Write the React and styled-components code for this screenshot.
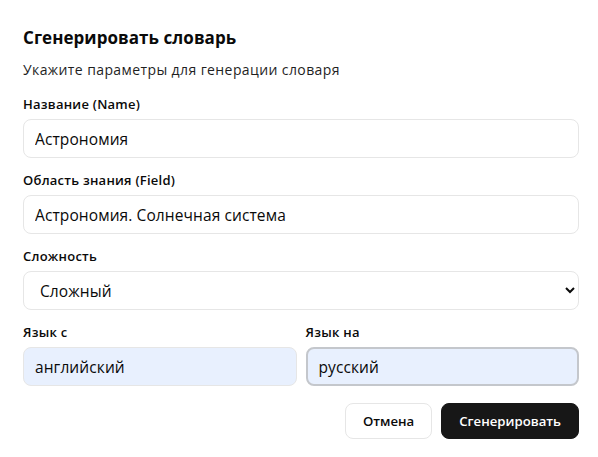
import React, { useState } from 'react';
import styled, { createGlobalStyle } from 'styled-components';

const GlobalStyle = createGlobalStyle`
  html, body {
    margin: 0;
    padding: 0;
    background: #ffffff;
  }
  body {
    font-family: "Open Sans", "Noto Sans", sans-serif;
    color: #0a0a0a;
  }
`;

function App() {
  const [name, setName] = useState('Астрономия');
  const [field, setField] = useState('Астрономия. Солнечная система');
  const [level, setLevel] = useState('hard');
  const [langFrom, setLangFrom] = useState('английский');
  const [langTo, setLangTo] = useState('русский');

  const handleSubmit = (event) => {
    event.preventDefault();
  };

  return (
    <Dialog>
      <GlobalStyle />
      <Title>Сгенерировать словарь</Title>
      <Subtitle>Укажите параметры для генерации словаря</Subtitle>
      <Form onSubmit={handleSubmit}>
        <Field>
          <Label>Название (Name)</Label>
          <Input value={name} onChange={e => setName(e.target.value)} />
        </Field>
        <Field>
          <Label>Область знания (Field)</Label>
          <Input value={field} onChange={e => setField(e.target.value)} />
        </Field>
        <Field>
          <Label>Сложность</Label>
          <Select value={level} onChange={e => setLevel(e.target.value)}>
            <option value="easy">Простой</option>
            <option value="medium">Средний</option>
            <option value="hard">Сложный</option>
          </Select>
        </Field>
        <Pair>
          <Field>
            <Label>Язык с</Label>
            <Input $filled value={langFrom} onChange={e => setLangFrom(e.target.value)} />
          </Field>
          <Field>
            <Label>Язык на</Label>
            <Input $filled $focused value={langTo} onChange={e => setLangTo(e.target.value)} />
          </Field>
        </Pair>
        <Actions>
          <Button type="button">Отмена</Button>
          <Button $primary type="submit">Сгенерировать</Button>
        </Actions>
      </Form>
    </Dialog>
  );
}

const Dialog = styled.div`
  box-sizing: border-box;
  width: 598px;
  height: 457px;
  padding: 26px 19px 0 23px;
  background: #ffffff;
  border-radius: 10px;
`;

const Title = styled.h2`
  margin: 0;
  font-size: 17px;
  font-weight: 700;
  line-height: 24px;
  letter-spacing: 0.05px;
`;

const Subtitle = styled.p`
  margin: 10px 0 0;
  font-size: 14px;
  line-height: 20px;
  letter-spacing: 0.4px;
  color: #1f1f1f;
`;

const Form = styled.form`
  display: flex;
  flex-direction: column;
  gap: 13px;
  margin-top: 15px;
`;

const Field = styled.div`
  display: flex;
  flex-direction: column;
  gap: 6px;
  min-width: 0;
`;

const Label = styled.label`
  font-size: 13px;
  font-weight: 600;
  line-height: 18px;
  letter-spacing: 0.25px;
`;

const Input = styled.input`
  box-sizing: border-box;
  height: 39px;
  width: 100%;
  padding: 0 11px;
  font-family: inherit;
  font-size: 15.5px;
  letter-spacing: 0.1px;
  color: #0a0a0a;
  background: ${p => (p.$filled ? '#e8f0fe' : '#ffffff')};
  border: ${p => (p.$focused ? '2px solid #c4c7cc' : '1px solid #e6e6e6')};
  border-radius: 8px;
  outline: none;
`;

const Select = styled.select`
  box-sizing: border-box;
  height: 39px;
  width: 100%;
  padding: 0 8px 0 12px;
  font-family: inherit;
  font-size: 15.5px;
  letter-spacing: 0.1px;
  color: #0a0a0a;
  background: #ffffff;
  border: 1px solid #e6e6e6;
  border-radius: 8px;
  outline: none;
`;

const Pair = styled.div`
  display: grid;
  grid-template-columns: 1fr 1fr;
  gap: 9px;
`;

const Actions = styled.div`
  display: flex;
  justify-content: flex-end;
  gap: 9px;
  margin-top: 4px;
`;

const Button = styled.button`
  box-sizing: border-box;
  height: 36px;
  padding: 0 17px;
  font-family: inherit;
  font-size: 13.2px;
  font-weight: 600;
  border-radius: 8px;
  cursor: pointer;
  color: ${p => (p.$primary ? '#ffffff' : '#0a0a0a')};
  background: ${p => (p.$primary ? '#171717' : '#ffffff')};
  border: 1px solid ${p => (p.$primary ? '#171717' : '#e6e6e6')};
`;

export default App;
